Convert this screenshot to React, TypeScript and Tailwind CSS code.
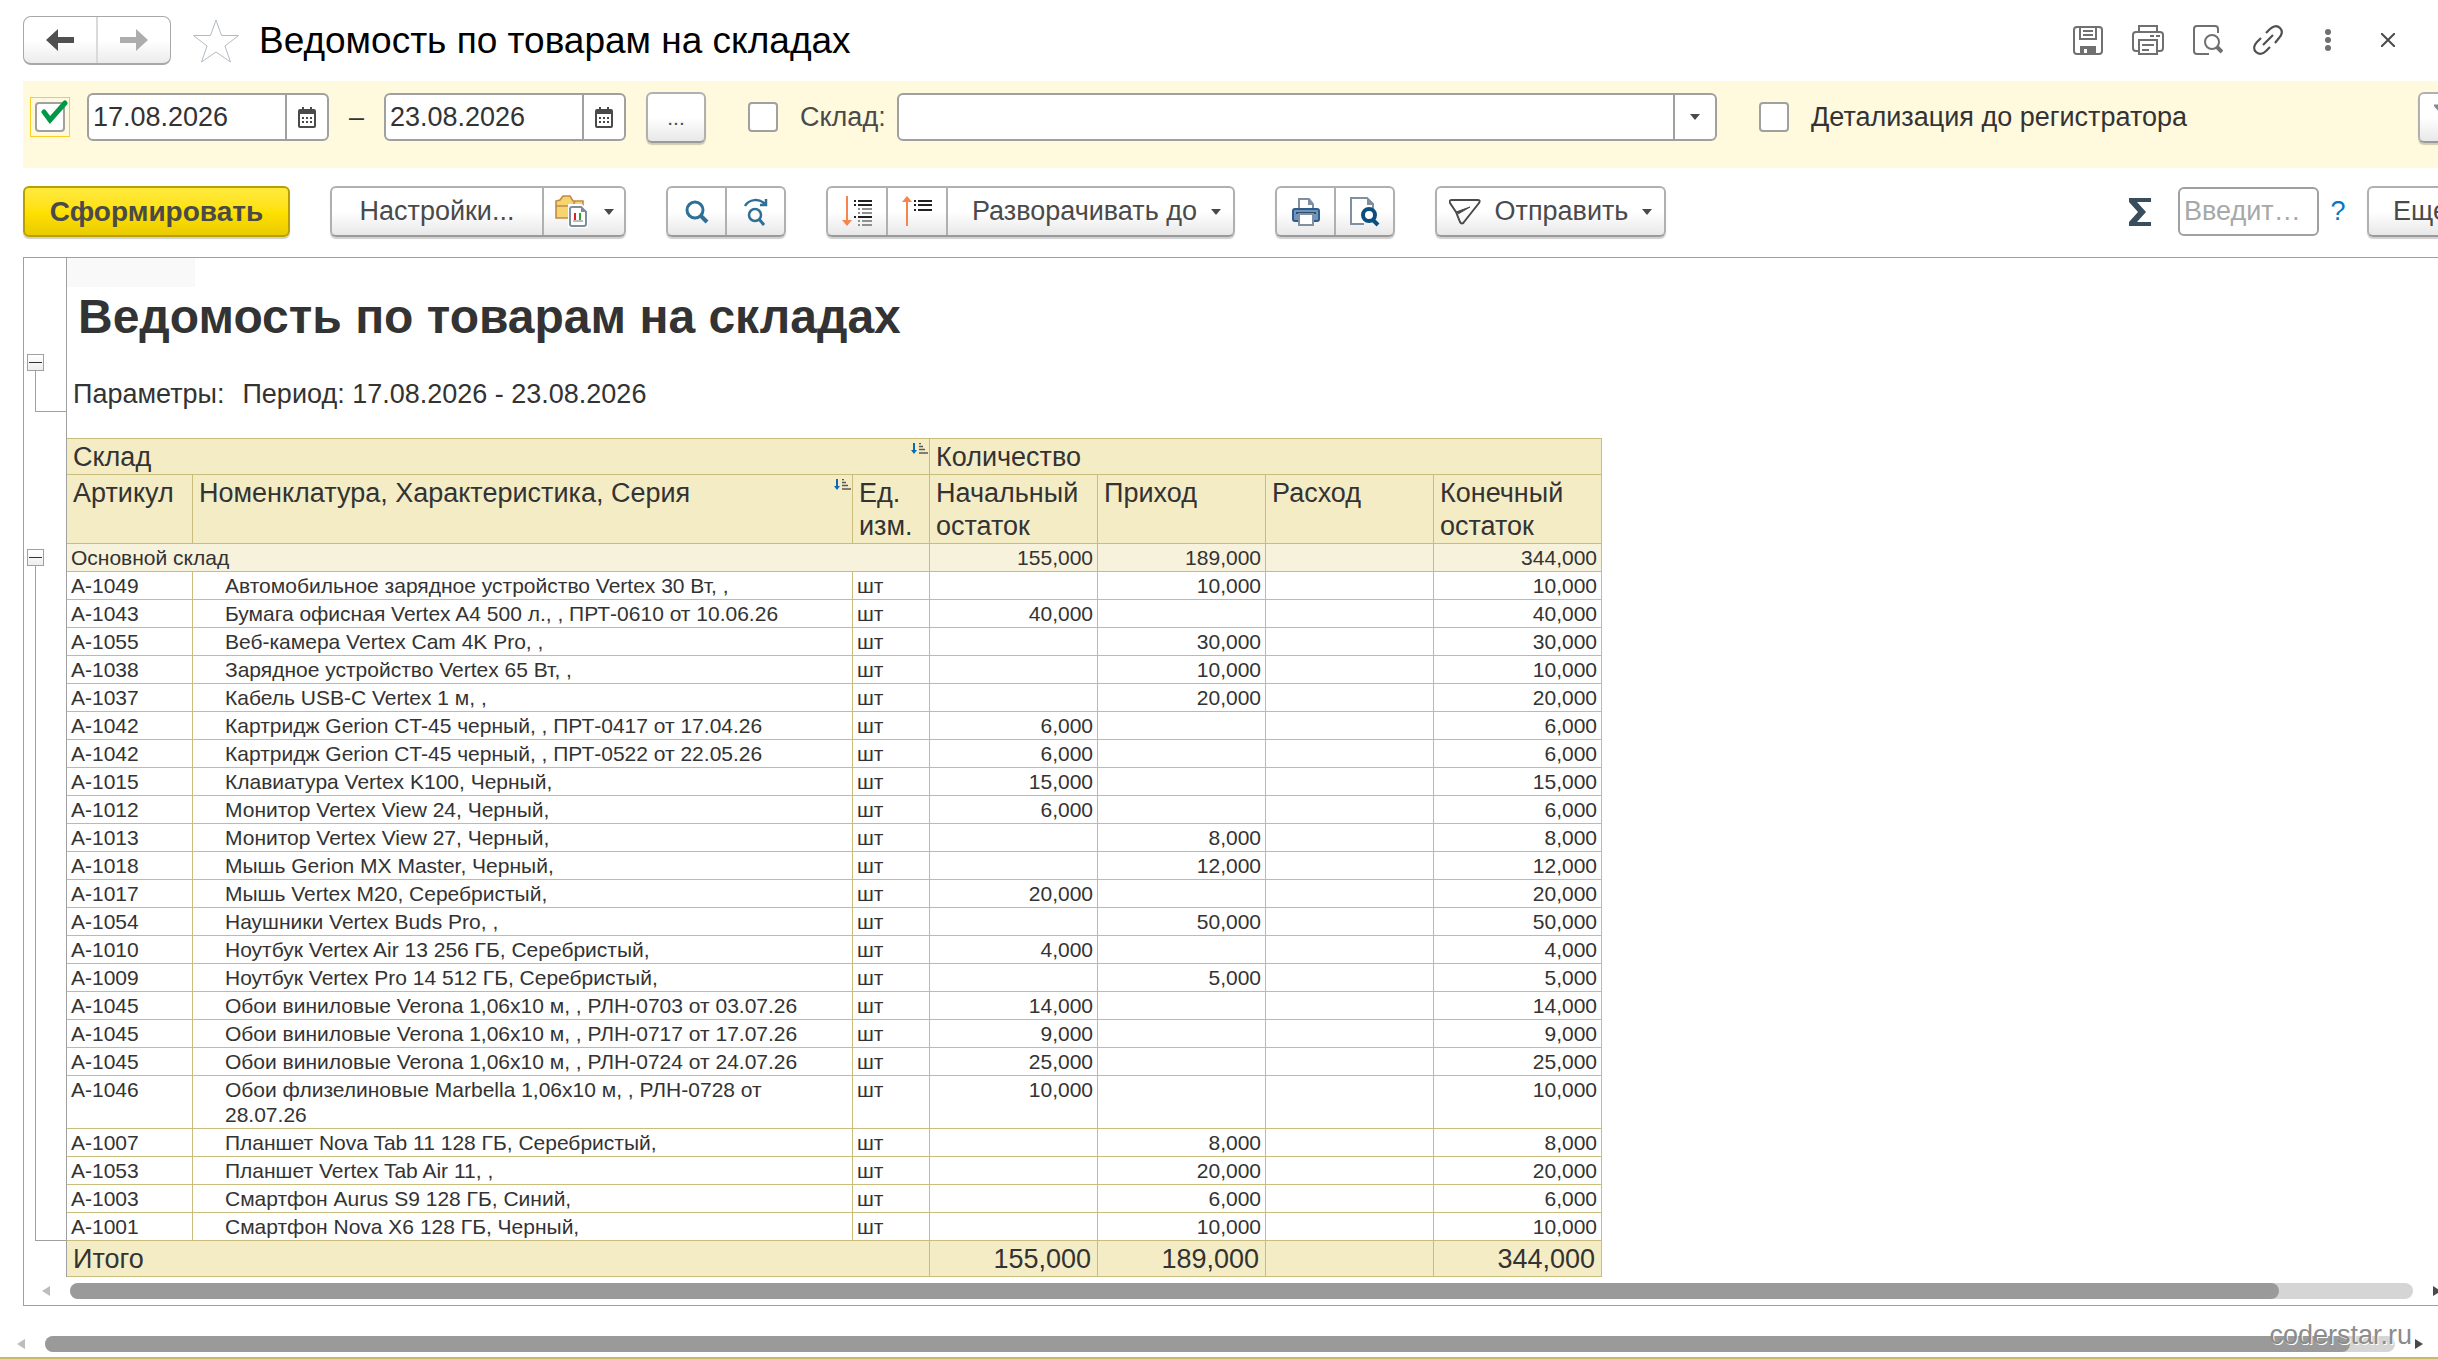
import React, { useState } from 'react';

interface StockRow {
  code: string;
  name: string;
  start?: string;
  income?: string;
  end: string;
}

const rows: StockRow[] = [
  { code: 'А-1049', name: 'Автомобильное зарядное устройство Vertex 30 Вт, ,', income: '10,000', end: '10,000' },
  { code: 'А-1043', name: 'Бумага офисная Vertex A4 500 л., , ПРТ-0610 от 10.06.26', start: '40,000', end: '40,000' },
  { code: 'А-1055', name: 'Веб-камера Vertex Cam 4K Pro, ,', income: '30,000', end: '30,000' },
  { code: 'А-1038', name: 'Зарядное устройство Vertex 65 Вт, ,', income: '10,000', end: '10,000' },
  { code: 'А-1037', name: 'Кабель USB-C Vertex 1 м, ,', income: '20,000', end: '20,000' },
  { code: 'А-1042', name: 'Картридж Gerion CT-45 черный, , ПРТ-0417 от 17.04.26', start: '6,000', end: '6,000' },
  { code: 'А-1042', name: 'Картридж Gerion CT-45 черный, , ПРТ-0522 от 22.05.26', start: '6,000', end: '6,000' },
  { code: 'А-1015', name: 'Клавиатура Vertex K100, Черный,', start: '15,000', end: '15,000' },
  { code: 'А-1012', name: 'Монитор Vertex View 24, Черный,', start: '6,000', end: '6,000' },
  { code: 'А-1013', name: 'Монитор Vertex View 27, Черный,', income: '8,000', end: '8,000' },
  { code: 'А-1018', name: 'Мышь Gerion MX Master, Черный,', income: '12,000', end: '12,000' },
  { code: 'А-1017', name: 'Мышь Vertex M20, Серебристый,', start: '20,000', end: '20,000' },
  { code: 'А-1054', name: 'Наушники Vertex Buds Pro, ,', income: '50,000', end: '50,000' },
  { code: 'А-1010', name: 'Ноутбук Vertex Air 13 256 ГБ, Серебристый,', start: '4,000', end: '4,000' },
  { code: 'А-1009', name: 'Ноутбук Vertex Pro 14 512 ГБ, Серебристый,', income: '5,000', end: '5,000' },
  { code: 'А-1045', name: 'Обои виниловые Verona 1,06х10 м, , РЛН-0703 от 03.07.26', start: '14,000', end: '14,000' },
  { code: 'А-1045', name: 'Обои виниловые Verona 1,06х10 м, , РЛН-0717 от 17.07.26', start: '9,000', end: '9,000' },
  { code: 'А-1045', name: 'Обои виниловые Verona 1,06х10 м, , РЛН-0724 от 24.07.26', start: '25,000', end: '25,000' },
  { code: 'А-1046', name: 'Обои флизелиновые Marbella 1,06х10 м, , РЛН-0728 от 28.07.26', start: '10,000', end: '10,000' },
  { code: 'А-1007', name: 'Планшет Nova Tab 11 128 ГБ, Серебристый,', income: '8,000', end: '8,000' },
  { code: 'А-1053', name: 'Планшет Vertex Tab Air 11, ,', income: '20,000', end: '20,000' },
  { code: 'А-1003', name: 'Смартфон Aurus S9 128 ГБ, Синий,', income: '6,000', end: '6,000' },
  { code: 'А-1001', name: 'Смартфон Nova X6 128 ГБ, Черный,', income: '10,000', end: '10,000' },
];

const groupClass =
  'flex h-[51px] shrink-0 rounded-md border-2 border-[#b0b0b0] border-b-[#9a9a9a] bg-linear-to-b from-white from-50% to-[#e8e8e8] shadow-[0_2px_1px_#d0d0d0] text-[#4a4a4a]';
const cellClass = 'border-r border-b border-[#cabd7b]';
const headClass = `${cellClass} bg-[#f4ecc5] px-1.5 pt-0.5 text-left align-top font-normal text-[27px] leading-[33px]`;
const bodyClass = `${cellClass} px-1 py-px align-top`;

const Caret = () => (
  <svg width="10" height="6" viewBox="0 0 10 6" aria-hidden="true">
    <path d="M0 0h10L5 6z" fill="#4a4a4a" />
  </svg>
);

const CalendarIcon = () => (
  <svg width="18" height="21" viewBox="0 0 18 21" aria-hidden="true">
    <path d="M2 2h2V0h2v2h6V0h2v2h2a2 2 0 0 1 2 2v15a2 2 0 0 1-2 2H2a2 2 0 0 1-2-2V4a2 2 0 0 1 2-2z" fill="#4a4a4a" />
    <path d="M2 7h14v12H2z" fill="#fff" />
    <path d="M4 10h2v2H4zM8 10h2v2H8zM12 10h2v2h-2zM4 14h2v2H4zM8 14h2v2H8zM12 14h2v2h-2z" fill="#4a4a4a" />
  </svg>
);

const SortIcon = () => (
  <svg width="17" height="11" viewBox="0 0 17 11" className="absolute top-1 right-px" aria-hidden="true">
    <path d="M3 0v8" stroke="#0a6ab4" strokeWidth="2" />
    <path d="M0 7h6l-3 4z" fill="#0a6ab4" />
    <path d="M8 .5h2M8 3.500h4M8 6.500h6M8 10h9" stroke="#5a5a5a" strokeWidth="1.300" />
  </svg>
);

const ArrowIcon = ({ left = false, muted = false }: { left?: boolean; muted?: boolean }) => (
  <svg width="8" height="10" viewBox="0 0 8 10" className="shrink-0" aria-hidden="true">
    <path d={left ? 'M8 0v10L0 5z' : 'M0 0v10l8-5z'} fill={muted ? '#bdbdbd' : '#4a4a4a'} />
  </svg>
);

interface DateFieldProps {
  label: string;
  value: string;
  onChange: (value: string) => void;
}

const DateField: React.FC<DateFieldProps> = ({ label, value, onChange }) => (
  <div className="flex h-12 w-[242px] shrink-0 overflow-hidden rounded-md border-2 border-[#a0a0a0] bg-white">
    <input
      type="text"
      aria-label={label}
      value={value}
      onChange={(e) => onChange(e.target.value)}
      className="min-w-0 flex-1 pl-1 text-[#333] outline-none"
    />
    <button type="button" aria-label="Выбрать дату" className="flex w-[42px] items-center justify-center border-l-2 border-[#a0a0a0]">
      <CalendarIcon />
    </button>
  </div>
);

const CollapseButton = ({ label }: { label: string }) => (
  <button
    type="button"
    aria-label={label}
    className="ml-[3px] flex size-[17px] shrink-0 items-center justify-center border border-[#a0a0a0] bg-linear-to-b from-white to-[#eee]"
  >
    <span className="h-px w-[13px] bg-[#333]" />
  </button>
);

const TitleBar: React.FC = () => (
  <header className="flex h-[81px] items-center pr-5 pl-[23px]">
    <div className="flex h-[49px] w-[148px] shrink-0 rounded-lg border border-[#a8a8a8] border-b-2 bg-linear-to-b from-white from-50% to-[#ececec]">
      <button type="button" aria-label="Назад" className="flex flex-1 items-center justify-center border-r-2 border-[#dadada]">
        <svg width="28" height="22" viewBox="0 0 28 22">
          <path d="M0 11 12 0v8h16v6H12v8z" fill="#505050" />
        </svg>
      </button>
      <button type="button" aria-label="Вперед" className="flex flex-1 items-center justify-center">
        <svg width="28" height="22" viewBox="0 0 28 22">
          <path d="M28 11 16 0v8H0v6h16v8z" fill="#adadad" />
        </svg>
      </button>
    </div>
    <button type="button" aria-label="Добавить в избранное" className="ml-[22px] shrink-0">
      <svg width="46" height="44" viewBox="0 0 46 44" fill="none" stroke="#b4bbc2">
        <path d="M23 1 28.500 16.500H45.500L32 27l5.500 16L23 33 8.500 43 14 27 .5 16.500H17.500z" />
      </svg>
    </button>
    <h1 className="ml-[20px] text-[37px] whitespace-nowrap text-black">Ведомость по товарам на складах</h1>
    <div className="mb-0.5 ml-auto flex shrink-0">
      <button type="button" aria-label="Сохранить" className="flex w-[60px] justify-center">
        <svg width="30" height="30" viewBox="0 0 30 30" fill="none" stroke="#707070" strokeWidth="2">
          <rect x="1" y="2" width="28" height="27" rx="3" />
          <path d="M7 2v12h16V2M10 6h10M10 10h10" />
          <path d="M8 29v-7h14v7z" fill="#707070" />
          <path d="M11 24h3v4h-3z" fill="#fff" stroke="none" />
        </svg>
      </button>
      <button type="button" aria-label="Печать" className="flex w-[60px] justify-center">
        <svg width="32" height="30" viewBox="0 0 32 30" fill="none" stroke="#707070" strokeWidth="2">
          <path d="M7 7V1h18v6M7 26H4a3 3 0 0 1-3-3V10a3 3 0 0 1 3-3h24a3 3 0 0 1 3 3v13a3 3 0 0 1-3 3h-3" />
          <path d="M7 15h18v14H7zM10 20h12M10 25h7M18 11h4M24 11h4" />
        </svg>
      </button>
      <button type="button" aria-label="Предварительный просмотр" className="flex w-[60px] justify-center">
        <svg width="30" height="30" viewBox="0 0 30 30" fill="none" stroke="#707070" strokeWidth="2">
          <path d="M25 8V4a3 3 0 0 0-3-3H4a3 3 0 0 0-3 3v22a3 3 0 0 0 3 3h12" />
          <circle cx="19" cy="17" r="7" />
          <path d="m24 22 5 5" strokeWidth="4" />
        </svg>
      </button>
      <button type="button" aria-label="Получить ссылку" className="flex w-[60px] justify-center">
        <svg width="30" height="30" viewBox="0 0 30 30" fill="none" stroke="#505050" strokeWidth="2.200">
          <path d="m13 8 4-4c3-3 7-4 10-1s2 7-1 10l-4 5" />
          <path d="m17 22-4 4c-3 3-7 4-10 1s-2-7 1-10l4-4M10 20 20 10" />
        </svg>
      </button>
      <button type="button" aria-label="Еще действия" className="flex w-[60px] items-center justify-center">
        <svg width="6" height="22" viewBox="0 0 6 22" fill="#707070">
          <circle cx="3" cy="3" r="3" />
          <circle cx="3" cy="11" r="3" />
          <circle cx="3" cy="19" r="3" />
        </svg>
      </button>
      <button type="button" aria-label="Закрыть" className="flex w-[60px] items-center justify-center">
        <svg width="14" height="14" viewBox="0 0 14 14" stroke="#4a4a4a" strokeWidth="2">
          <path d="m0 0 14 14M14 0 0 14" />
        </svg>
      </button>
    </div>
  </header>
);

const FilterBar: React.FC = () => {
  const [from, setFrom] = useState('17.08.2026');
  const [to, setTo] = useState('23.08.2026');
  const [usePeriod, setUsePeriod] = useState(true);

  return (
    <section className="ml-[23px] overflow-hidden bg-[#fff9dd] pt-2.5 pb-[25px] pl-[7px] text-[#333]">
      <div className="flex h-[52px] items-center">
        <div className="relative flex size-10 shrink-0 items-center justify-center border border-[#ffcc1f]">
          <input
            type="checkbox"
            aria-label="Период"
            checked={usePeriod}
            onChange={(e) => setUsePeriod(e.target.checked)}
            className="size-[30px] appearance-none rounded border-2 border-[#a0a0a0] bg-white"
          />
          {usePeriod && (
            <svg width="28" height="26" viewBox="0 0 28 26" className="pointer-events-none absolute top-0 left-2.5" aria-hidden="true">
              <path d="M3 14 9 22 24 5" fill="none" stroke="#009846" strokeWidth="5" strokeLinecap="round" />
            </svg>
          )}
        </div>
        <div className="ml-[17px] flex shrink-0 items-center">
          <DateField label="Начало периода" value={from} onChange={setFrom} />
          <span className="w-[55px] text-center">–</span>
          <DateField label="Конец периода" value={to} onChange={setTo} />
        </div>
        <button
          type="button"
          className="ml-5 h-[51px] w-[60px] shrink-0 rounded-md border-2 border-[#b0b0b0] border-b-[#9a9a9a] bg-linear-to-b from-white from-50% to-[#e8e8e8] text-[21px] text-[#4a4a4a] shadow-[0_2px_1px_#d0ccb4]"
        >
          ...
        </button>
        <input
          id="use-warehouse"
          type="checkbox"
          aria-label="Отбор по складу"
          className="ml-[42px] size-[30px] shrink-0 appearance-none rounded border-2 border-[#a0a0a0] bg-white"
        />
        <label htmlFor="warehouse" className="ml-[22px] w-[97px] shrink-0 text-[#4a4a4a]">
          Склад:
        </label>
        <div className="relative h-12 w-[820px] overflow-hidden rounded-md border-2 border-[#a0a0a0] bg-white">
          <select id="warehouse" defaultValue="" className="h-full w-full appearance-none pl-1 outline-none">
            <option value=""></option>
            <option value="main">Основной склад</option>
          </select>
          <span className="pointer-events-none absolute inset-y-0 right-0 flex w-[42px] items-center justify-center border-l-2 border-[#a0a0a0]">
            <Caret />
          </span>
        </div>
        <input
          id="details"
          type="checkbox"
          className="ml-[42px] size-[30px] shrink-0 appearance-none rounded border-2 border-[#a0a0a0] bg-white"
        />
        <label htmlFor="details" className="ml-[22px] whitespace-nowrap">
          Детализация до регистратора
        </label>
        <button
          type="button"
          aria-label="Настроить отбор"
          className="-mr-10 ml-auto flex h-[51px] w-[60px] shrink-0 items-center justify-center rounded-md border-2 border-[#b0b0b0] border-b-[#9a9a9a] bg-linear-to-b from-white from-50% to-[#e8e8e8] shadow-[0_2px_1px_#d0ccb4]"
        >
          <svg width="28" height="26" viewBox="0 0 28 26" fill="none" stroke="#7b8b9a" strokeWidth="3">
            <path d="M2 2h24L16 14v10h-4V14z" />
          </svg>
        </button>
      </div>
    </section>
  );
};

const Toolbar: React.FC = () => (
  <div className="flex h-[89px] items-center overflow-hidden pb-0.5 pl-[23px] text-[#4a4a4a]">
    <button
      type="button"
      className="h-[51px] w-[267px] shrink-0 rounded-md border-2 border-[#b8a000] bg-linear-to-b from-[#ffe93d] via-[#ffe100] to-[#eacb00] text-[28px] font-bold text-[#4a4a4a] shadow-[0_2px_1px_#d0d0d0]"
    >
      Сформировать
    </button>

    <div className={`${groupClass} ml-10 w-[296px]`}>
      <button type="button" className="flex-1 border-r-2 border-[#b0b0b0]">
        Настройки...
      </button>
      <button type="button" aria-label="Варианты отчета" className="flex w-20 items-center justify-center gap-4">
        <svg width="33" height="33" viewBox="0 0 33 33">
          <path d="M1 23V6l4-1 3-4h7l3 5h10v17z" fill="#f6d470" stroke="#c08a45" strokeWidth="1.600" />
          <path d="M1 11h17l2-5" fill="none" stroke="#c08a45" strokeWidth="1.600" />
          <path d="M13 9h14l6 6v18H13z" fill="#fff" />
          <path d="M17 12h9l5 5v12a2 2 0 0 1-2 2H17a2 2 0 0 1-2-2V14a2 2 0 0 1 2-2z" fill="#fff" stroke="#7c8e9c" strokeWidth="2" />
          <path d="M26 11v6h6z" fill="#7c8e9c" />
          <path d="M20 18v7" stroke="#e02020" strokeWidth="2" />
          <path d="M25 18v7" stroke="#30a030" strokeWidth="2" />
          <path d="M18 26h10" stroke="#777" />
        </svg>
        <Caret />
      </button>
    </div>

    <div className={`${groupClass} ml-10 w-[120px]`}>
      <button type="button" aria-label="Найти" className="flex flex-1 items-center justify-center border-r-2 border-[#b0b0b0]">
        <svg width="24" height="24" viewBox="0 0 24 24" fill="none" stroke="#2d6f96">
          <circle cx="10" cy="10" r="8" strokeWidth="3" />
          <path d="m15 15 7 7" strokeWidth="4" />
        </svg>
      </button>
      <button type="button" aria-label="Найти далее" className="flex flex-1 items-center justify-center">
        <svg width="24" height="28" viewBox="0 0 24 28" fill="none" stroke="#2d6f96">
          <circle cx="11" cy="17" r="6" strokeWidth="2.500" />
          <path d="m15 21 5 6" strokeWidth="3" />
          <path d="M1 8C5 1 15 0 21 6M22 1v6h-6" strokeWidth="2.500" />
        </svg>
      </button>
    </div>

    <div className={`${groupClass} ml-10 w-[409px]`}>
      <button type="button" aria-label="Развернуть все" className="flex w-[60px] items-center justify-center border-r-2 border-[#b0b0b0]">
        <svg width="30" height="31" viewBox="0 0 30 31" fill="none">
          <path d="M5 0v25" stroke="#f5854a" strokeWidth="2" />
          <path d="M0 24h10l-5 6z" fill="#f5854a" />
          <path d="M12 5h2M16 5h14M12 9h2M16 9h14M12 21h2M16 21h14" stroke="#222" strokeWidth="2" />
          <path d="M16 13h2M20 13h10M16 17h2M20 17h10M16 25h2M20 25h10M16 29h2M20 29h10" stroke="#909090" strokeWidth="2" />
        </svg>
      </button>
      <button type="button" aria-label="Свернуть все" className="flex w-[60px] items-center justify-center border-r-2 border-[#b0b0b0]">
        <svg width="30" height="31" viewBox="0 0 30 31" fill="none">
          <path d="M5 5v25" stroke="#f5854a" strokeWidth="2" />
          <path d="M0 6h10L5 0z" fill="#f5854a" />
          <path d="M12 5h2M16 5h14M12 9h2M16 9h14M12 14h2M16 14h14" stroke="#222" strokeWidth="2" />
        </svg>
      </button>
      <button type="button" className="flex flex-1 items-center justify-center gap-3.5 pl-3 whitespace-nowrap">
        Разворачивать до
        <Caret />
      </button>
    </div>

    <div className={`${groupClass} ml-10 w-[120px]`}>
      <button type="button" aria-label="Печать отчета" className="flex flex-1 items-center justify-center border-r-2 border-[#b0b0b0]">
        <svg width="28" height="28" viewBox="0 0 28 28">
          <path d="M7 12V1h10l4 5v6z" fill="#fff" stroke="#8090a0" strokeWidth="2" />
          <path d="M16 0v7h6z" fill="#8090a0" />
          <rect x="1" y="11" width="26" height="12" rx="2" fill="#6f94bd" stroke="#2f5c88" strokeWidth="2" />
          <path d="M4 15h20" stroke="#2f4c68" strokeWidth="2" />
          <path d="M7 16h14v11H7z" fill="#fff" stroke="#8090a0" strokeWidth="2" />
        </svg>
      </button>
      <button type="button" aria-label="Просмотр" className="flex flex-1 items-center justify-center">
        <svg width="30" height="30" viewBox="0 0 30 30" fill="none">
          <path d="M14 27H1V1h16l6 6v5" fill="#fff" stroke="#8090a0" strokeWidth="2" />
          <path d="M17 0v8h7z" fill="#8090a0" />
          <circle cx="19" cy="18" r="6" fill="#fff" stroke="#0a4f80" strokeWidth="4" />
          <path d="m23 23 5 5" stroke="#0a4f80" strokeWidth="4" />
        </svg>
      </button>
    </div>

    <div className={`${groupClass} ml-10 w-[231px]`}>
      <button type="button" className="flex flex-1 items-center justify-center whitespace-nowrap">
        <svg width="32" height="26" viewBox="0 0 32 26" fill="none" stroke="#4a4a4a" strokeWidth="2" strokeLinejoin="round">
          <path d="M3 1h26c2 0 2 1 1 3L15 23c-1 2-3 2-4 0L7 13 1 4C0 2 1 1 3 1z" />
          <path d="m7 13 14-5-12 7" fill="#4a4a4a" strokeWidth="1" />
        </svg>
        <span className="mx-3.5">Отправить</span>
        <Caret />
      </button>
    </div>

    <div className="-mr-[49px] ml-auto flex shrink-0 items-center">
      <button type="button" aria-label="Сумма" className="mr-[26px]">
        <svg width="23" height="28" viewBox="0 0 23 28">
          <path d="M0 0h22v4H8l9 10-9 10h14v4H0v-4l9-10L0 4z" fill="#3a4d5c" />
        </svg>
      </button>
      <input
        type="text"
        aria-label="Поиск по отчету"
        placeholder="Введит…"
        className="h-[49px] w-[141px] rounded-md border-2 border-[#a0a0a0] bg-white pl-1 outline-none placeholder:text-[#a8a8a8]"
      />
      <button type="button" className="w-12 pr-2.5 text-[#0a75c2]">
        ?
      </button>
      <div className={`${groupClass} w-[120px]`}>
        <button type="button" className="flex flex-1 items-center gap-3 pl-6">
          Еще
          <Caret />
        </button>
      </div>
    </div>
  </div>
);

const ReportTable: React.FC = () => (
  <table className="w-[1535px] table-fixed border-separate border-spacing-0 border-t border-[#cabd7b] text-[21px] leading-[25px]">
    <colgroup>
      <col className="w-[126px]" />
      <col className="w-[660px]" />
      <col className="w-[77px]" />
      <col className="w-[168px]" />
      <col className="w-[168px]" />
      <col className="w-[168px]" />
      <col className="w-[168px]" />
    </colgroup>
    <thead>
      <tr>
        <th colSpan={3} className={`${headClass} relative`}>
          Склад
          <SortIcon />
        </th>
        <th colSpan={4} className={headClass}>Количество</th>
      </tr>
      <tr>
        <th className={headClass}>Артикул</th>
        <th className={`${headClass} relative`}>
          Номенклатура, Характеристика, Серия
          <SortIcon />
        </th>
        <th className={headClass}>Ед. изм.</th>
        <th className={headClass}>Начальный остаток</th>
        <th className={headClass}>Приход</th>
        <th className={headClass}>Расход</th>
        <th className={headClass}>Конечный остаток</th>
      </tr>
    </thead>
    <tbody>
      <tr className="bg-[#f7f2dc]">
        <td colSpan={3} className={bodyClass}>Основной склад</td>
        <td className={`${bodyClass} text-right`}>155,000</td>
        <td className={`${bodyClass} text-right`}>189,000</td>
        <td className={bodyClass}></td>
        <td className={`${bodyClass} text-right`}>344,000</td>
      </tr>
      {rows.map((row, index) => (
        <tr key={index}>
          <td className={bodyClass}>{row.code}</td>
          <td className={`${cellClass} py-px pr-2 pl-8 align-top`}>{row.name}</td>
          <td className={bodyClass}>шт</td>
          <td className={`${bodyClass} text-right`}>{row.start}</td>
          <td className={`${bodyClass} text-right`}>{row.income}</td>
          <td className={bodyClass}></td>
          <td className={`${bodyClass} text-right`}>{row.end}</td>
        </tr>
      ))}
    </tbody>
    <tfoot>
      <tr>
        <th colSpan={3} className={headClass}>Итого</th>
        <td className={`${cellClass} bg-[#f4ecc5] px-1.5 pt-0.5 text-right text-[27px] leading-[33px]`}>155,000</td>
        <td className={`${cellClass} bg-[#f4ecc5] px-1.5 pt-0.5 text-right text-[27px] leading-[33px]`}>189,000</td>
        <td className={`${cellClass} bg-[#f4ecc5]`}></td>
        <td className={`${cellClass} bg-[#f4ecc5] px-1.5 pt-0.5 text-right text-[27px] leading-[33px]`}>344,000</td>
      </tr>
    </tfoot>
  </table>
);

const App: React.FC = () => {
  return (
    <div className="relative overflow-hidden border-b-2 border-[#c8bb66] bg-white font-['Liberation_Sans',Arial,sans-serif] text-[27px] leading-[33px] text-[#333]">
      <TitleBar />
      <FilterBar />
      <Toolbar />

      <main className="ml-[23px] border-t border-b border-l border-[#a0a0a0]">
        <div className="flex">
          <div className="flex w-[43px] shrink-0 flex-col border-r border-[#a0a0a0] pt-24 pb-9">
            <CollapseButton label="Свернуть параметры" />
            <div className="ml-[11px] h-[41px] shrink-0 border-b border-l border-[#a0a0a0]" />
            <div className="h-[137px] shrink-0" />
            <CollapseButton label="Свернуть склад" />
            <div className="ml-[11px] flex-1 border-b border-l border-[#a0a0a0]" />
          </div>
          <div>
            <div className="h-[29px] w-32 bg-[#f9f9f9]" />
            <h2 className="mt-0.5 pl-[11px] text-[48px] leading-[56px] font-bold">Ведомость по товарам на складах</h2>
            <p className="mt-[33px] mb-[27px] flex gap-[18px] pl-1.5">
              <span>Параметры:</span>
              <span>Период: 17.08.2026 - 23.08.2026</span>
            </p>
            <ReportTable />
          </div>
        </div>
        <div className="flex h-7 items-center gap-5 overflow-hidden pl-[18px]">
          <ArrowIcon left muted />
          <div className="h-4 flex-1 rounded-full bg-[#d5d5d5]">
            <div className="h-4 w-[94.3%] rounded-full bg-[#9a9a9a]" />
          </div>
          <div className="-mr-[3px] shrink-0">
            <ArrowIcon />
          </div>
        </div>
      </main>

      <div className="mt-[30px] mb-[5px] flex items-center gap-5 pr-[15px] pl-[17px]">
        <ArrowIcon left muted />
        <div className="h-4 flex-1 rounded-full bg-[#d5d5d5]">
          <div className="h-4 w-[98.1%] rounded-full bg-[#9a9a9a]" />
        </div>
        <ArrowIcon />
      </div>

      <span className="absolute right-[26px] bottom-[5px] text-[#8c8c8c] [text-shadow:1px_1px_0_#fff]">coderstar.ru</span>
    </div>
  );
};

export default App;
